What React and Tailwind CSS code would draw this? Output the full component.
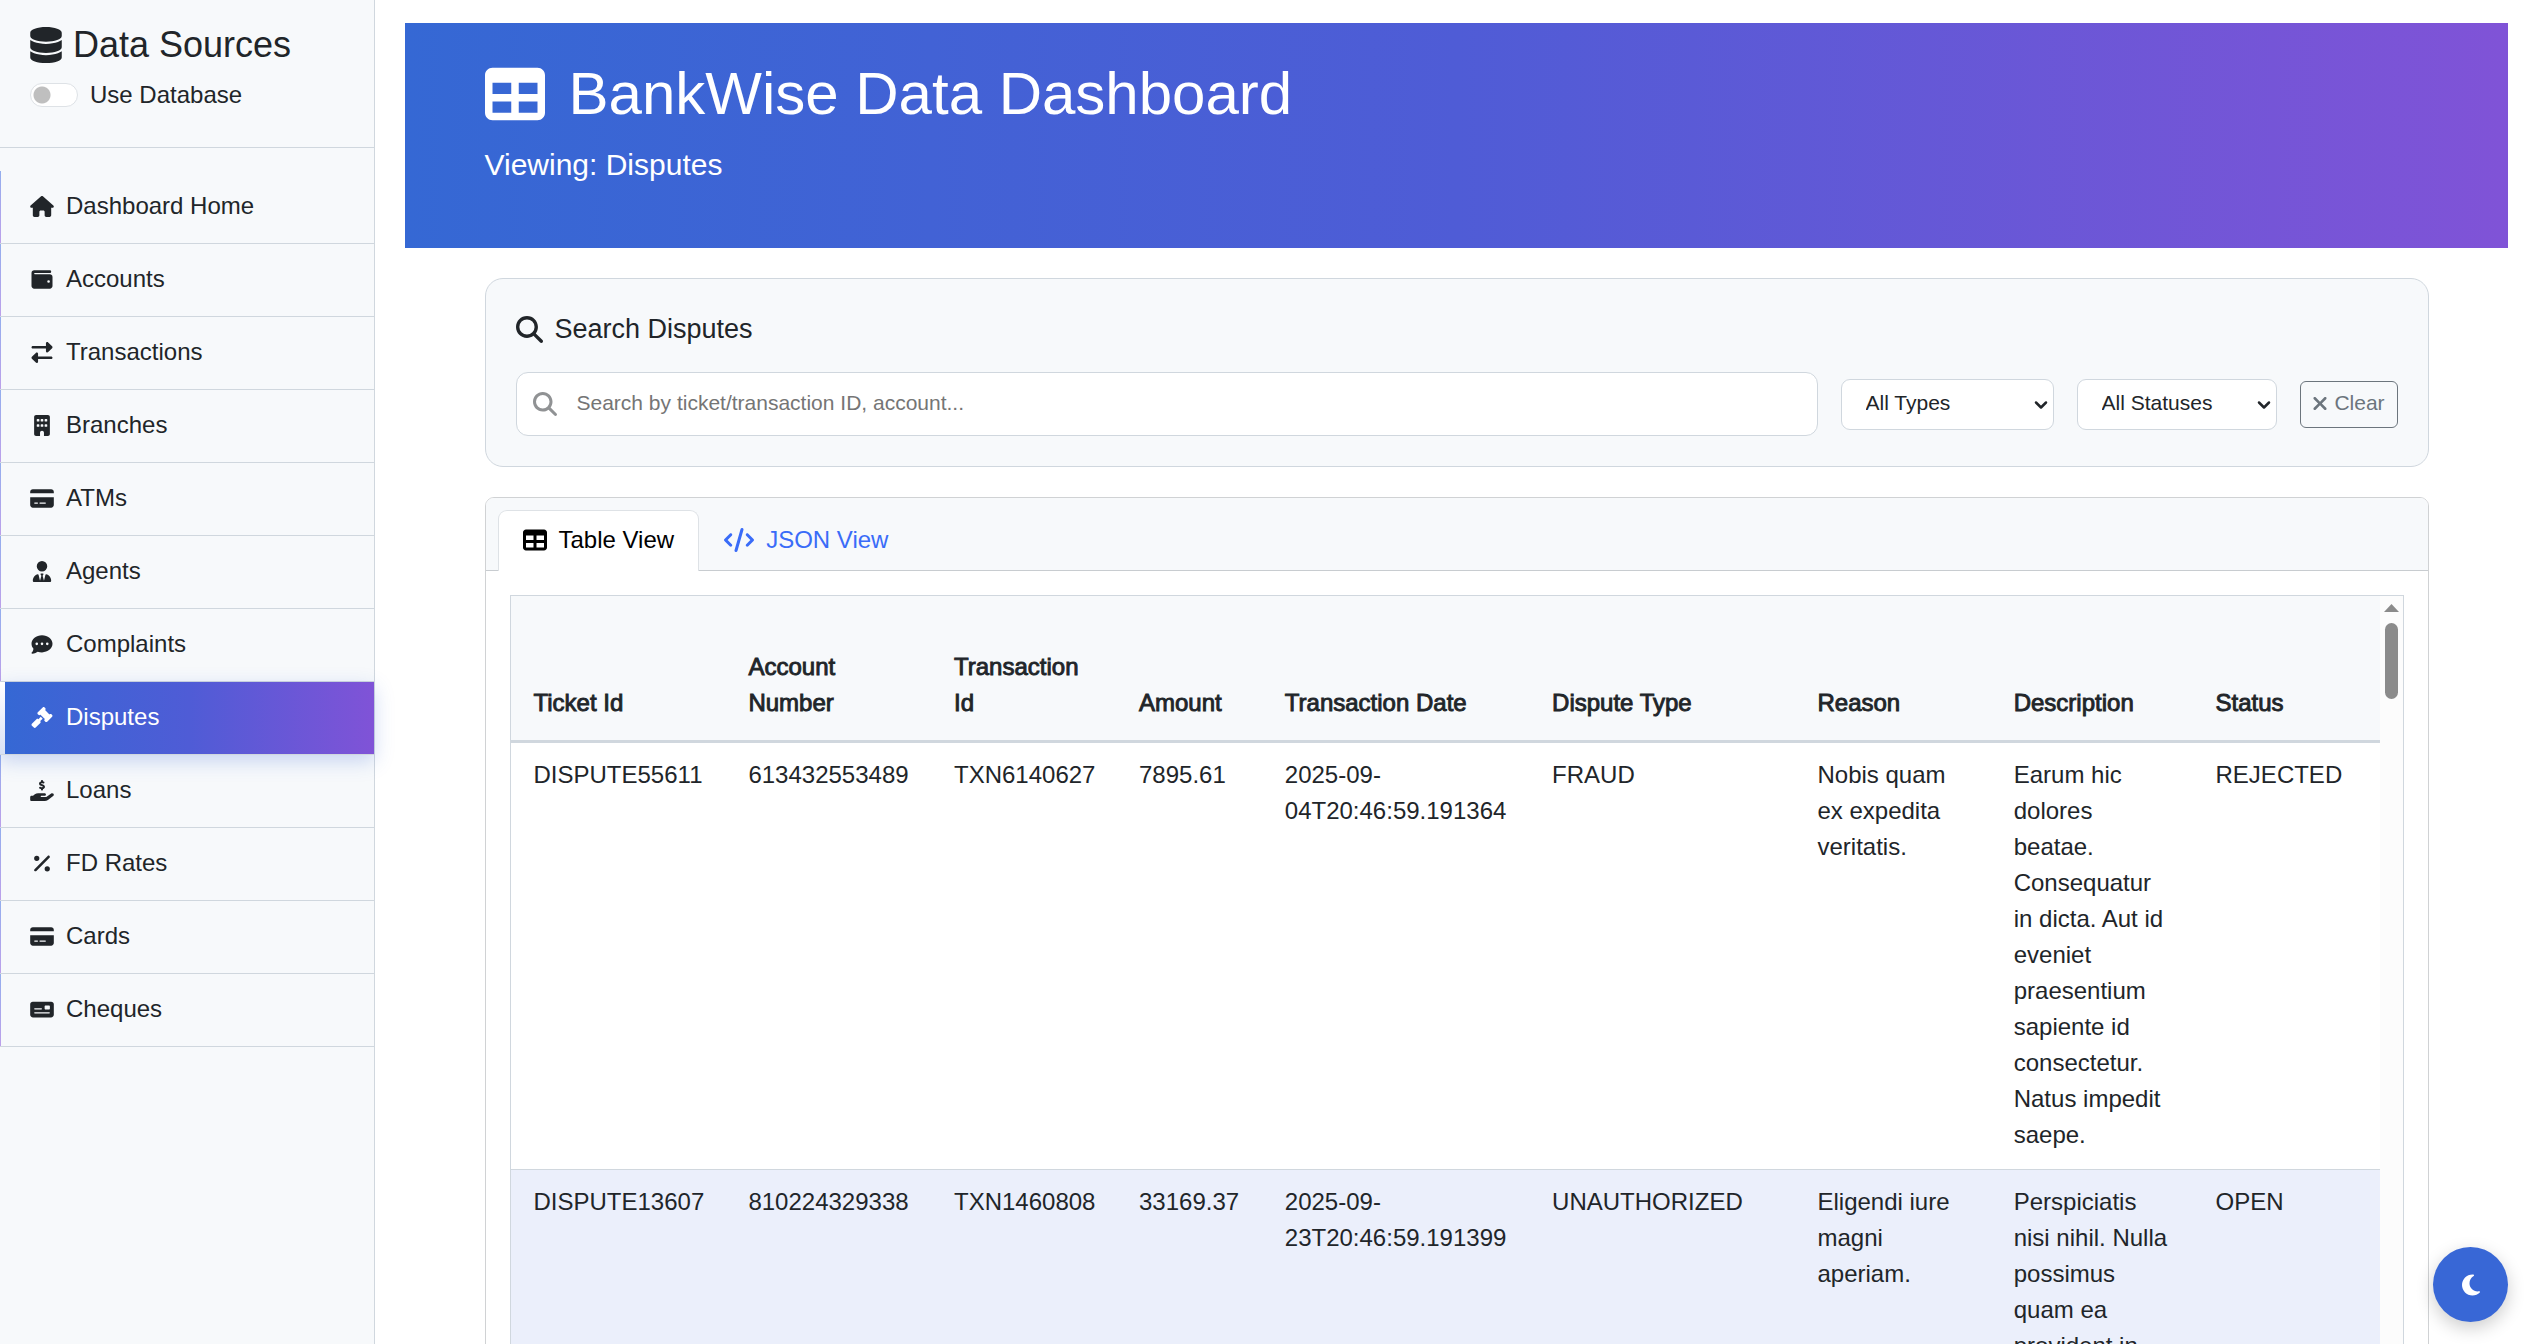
import React from "react";
import {
  FaDatabase, FaHouse, FaWallet, FaRightLeft, FaBuilding, FaCreditCard, FaUserTie,
  FaCommentDots, FaGavel, FaHandHoldingDollar, FaPercent, FaMoneyCheck, FaTable,
  FaMagnifyingGlass, FaCode, FaXmark, FaMoon,
} from "react-icons/fa6";
import { ChevronDown } from "lucide-react";

const NAV = [
  ["Dashboard Home", FaHouse],
  ["Accounts", FaWallet],
  ["Transactions", FaRightLeft],
  ["Branches", FaBuilding],
  ["ATMs", FaCreditCard],
  ["Agents", FaUserTie],
  ["Complaints", FaCommentDots],
  ["Disputes", FaGavel],
  ["Loans", FaHandHoldingDollar],
  ["FD Rates", FaPercent],
  ["Cards", FaCreditCard],
  ["Cheques", FaMoneyCheck],
];

const COLUMNS = [
  ["Ticket Id", "w-[11.5%]"],
  ["Account Number", "w-[11%]"],
  ["Transaction Id", "w-[9.9%]"],
  ["Amount", "w-[7.8%]"],
  ["Transaction Date", "w-[14.3%]"],
  ["Dispute Type", "w-[14.2%]"],
  ["Reason", "w-[10.5%]"],
  ["Description", "w-[10.8%]"],
  ["Status", "w-[10%]"],
];

const ROWS = [
  ["DISPUTE55611", "613432553489", "TXN6140627", "7895.61", "2025-09-04T20:46:59.191364", "FRAUD",
    "Nobis quam ex expedita veritatis.",
    "Earum hic dolores beatae. Consequatur in dicta. Aut id eveniet praesentium sapiente id consectetur. Natus impedit saepe.",
    "REJECTED"],
  ["DISPUTE13607", "810224329338", "TXN1460808", "33169.37", "2025-09-23T20:46:59.191399", "UNAUTHORIZED",
    "Eligendi iure magni aperiam.",
    "Perspiciatis nisi nihil. Nulla possimus quam ea provident in.",
    "OPEN"],
];

function NavItem({ label, Icon }) {
  const active = label === "Disputes";
  return (
    <li
      className={
        active
          ? "relative z-10 border-b border-[#d0d7de] bg-linear-to-b from-white to-[#d8e1f5] bg-clip-padding pl-[5px] shadow-[0_6px_18px_rgba(56,103,214,0.25)]"
          : "border-b border-[#d0d7de] bg-linear-to-b from-[#93aeee] to-[#bca0ea] bg-clip-padding pl-px"
      }
    >
      <a
        href="#"
        className={
          active
            ? "flex h-[72px] items-center gap-3 bg-linear-to-r/srgb from-[#3568d4] via-[#4f5cd6] to-[#8053d7] pb-[2px] pl-[25px] text-white"
            : "flex h-[72px] items-center gap-3 bg-[#f7f9fb] pb-[2px] pl-[29px]"
        }
      >
        <Icon className="h-[21px] w-6 shrink-0" />
        {label}
      </a>
    </li>
  );
}

function Sidebar() {
  return (
    <aside className="w-[375px] shrink-0 border-r border-[#d0d7de] bg-[#f7f9fb]">
      <div className="border-b border-[#d0d7de] px-[30px] pt-[23px] pb-[34px]">
        <h4 className="mb-[11px] flex items-center gap-[11px] text-[36px] leading-[43px]">
          <FaDatabase className="h-9 w-8" />
          Data Sources
        </h4>
        <label className="flex h-9 items-center gap-3">
          <input
            type="checkbox"
            role="switch"
            className="h-6 w-12 appearance-none rounded-full border border-[#dee2e6] bg-white bg-[radial-gradient(circle_at_11px_11px,#bfbfbf_8px,transparent_9px)]"
          />
          Use Database
        </label>
      </div>
      <nav className="mt-[23px]">
        <ul>
          {NAV.map(([label, Icon]) => (
            <NavItem key={label} label={label} Icon={Icon} />
          ))}
        </ul>
      </nav>
    </aside>
  );
}

function Select({ label, className }) {
  return (
    <div className={className}>
      <select
        aria-label={label}
        className="h-[51px] w-full appearance-none rounded-[9px] border border-[#d0d7de] bg-white pb-[2px] pl-6 text-[21px]"
      >
        <option>{label}</option>
      </select>
      <ChevronDown className="pointer-events-none absolute top-4 right-[3px] size-5" strokeWidth={3} />
    </div>
  );
}

function SearchPanel() {
  return (
    <section className="mt-[30px] rounded-[18px] border border-[#d0d7de] bg-[#f7f9fb] p-[30px]">
      <h5 className="mb-[23px] flex items-center gap-3 text-[27px] leading-10">
        <FaMagnifyingGlass className="size-[27px]" />
        Search Disputes
      </h5>
      <div className="flex items-center gap-[23px]">
        <div className="relative flex-1">
          <FaMagnifyingGlass className="absolute top-5 left-[17px] size-6 text-[#909294]" />
          <input
            type="text"
            aria-label="Search disputes"
            placeholder="Search by ticket/transaction ID, account..."
            className="h-16 w-full rounded-xl border border-[#d0d7de] bg-white pb-[2px] pl-[60px] text-[21px] placeholder:text-[#757575]"
          />
        </div>
        <Select label="All Types" className="relative w-[213px]" />
        <Select label="All Statuses" className="relative w-[200px]" />
        <button
          type="button"
          className="flex h-[47px] w-[98px] items-center justify-center gap-[6px] rounded-[6px] border border-[#6c757d] pb-[2px] text-[21px] text-[#6c757d]"
        >
          <FaXmark className="h-[21px] w-4" />
          Clear
        </button>
      </div>
    </section>
  );
}

function DataTable() {
  return (
    <div className="flex border border-[#d0d7de]">
      <div className="min-w-0 flex-1">
        <table className="w-full table-fixed border-collapse text-left">
          <thead>
            <tr className="h-[145px] border-b-3 border-[#d0d7de] bg-[#f7f9fb]">
              {COLUMNS.map(([name, width]) => (
                <th
                  key={name}
                  className={`${width} pr-[21px] pb-[19px] pl-[23px] align-bottom font-normal [-webkit-text-stroke:0.9px_#212529]`}
                >
                  {name}
                </th>
              ))}
            </tr>
          </thead>
          <tbody>
            {ROWS.map((row) => (
              <tr key={row[0]} className="border-b border-[#d0d7de] even:bg-[#ebeffb]">
                {row.map((cell, i) => (
                  <td key={i} className="pt-[14px] pr-[21px] pb-4 pl-[23px] align-top">{cell}</td>
                ))}
              </tr>
            ))}
          </tbody>
        </table>
      </div>
      <div className="flex w-[23px] flex-col items-center bg-[#fcfcfc] pt-2" aria-hidden="true">
        <svg viewBox="0 0 15 8" className="h-2 w-[15px] fill-[#8b8b8b]">
          <path d="M7.5 0 15 8H0z" />
        </svg>
        <div className="mt-[11px] h-[76px] w-[13px] rounded-full bg-[#8b8b8b]" />
      </div>
    </div>
  );
}

export default function App() {
  return (
    <div className="flex h-screen overflow-hidden bg-white font-['Liberation_Sans',Arial,sans-serif] text-[24px] leading-9 text-[#212529]">
      <Sidebar />
      <main className="min-w-0 flex-1 overflow-hidden pt-[23px] pr-[26px] pl-[30px]">
        <header className="bg-linear-to-r/srgb from-[#3568d4] via-[#4f5cd6] to-[#8053d7] pt-[35px] pb-9 text-white">
          <div className="mx-auto max-w-[1944px]">
            <h1 className="mb-3 flex items-center gap-6 text-[60px] leading-[72px]">
              <FaTable className="size-[60px]" />
              BankWise Data Dashboard
            </h1>
            <p className="mb-[25px] text-[30px] leading-[45px]">Viewing: Disputes</p>
          </div>
        </header>
        <div className="mx-auto max-w-[1944px]">
          <SearchPanel />
          <section className="mt-[30px] rounded-[9px] border border-[#d0d2d4]">
            <div className="flex rounded-t-lg border-b border-[#c8ccd0] bg-[#f7f9fb] px-3 pt-3" role="tablist">
              <button
                type="button"
                role="tab"
                aria-selected="true"
                className="-mb-px flex items-center gap-3 rounded-t-[9px] border border-b-0 border-[#dee2e6] bg-white px-6 pt-[11px] pb-[13px] text-black"
              >
                <FaTable className="size-6" />
                Table View
              </button>
              <button
                type="button"
                role="tab"
                aria-selected="false"
                className="flex items-center gap-3 px-[25px] py-3 text-[#3a6cf8]"
              >
                <FaCode className="h-6 w-[30px]" />
                JSON View
              </button>
            </div>
            <div className="p-6">
              <DataTable />
            </div>
          </section>
        </div>
      </main>
      <button
        type="button"
        aria-label="Toggle dark mode"
        className="fixed right-[26px] bottom-[22px] flex size-[75px] items-center justify-center rounded-full bg-[#3867d6] text-white shadow-[0_6px_18px_rgba(0,0,0,0.2)]"
      >
        <FaMoon className="h-6 w-5" />
      </button>
    </div>
  );
}
